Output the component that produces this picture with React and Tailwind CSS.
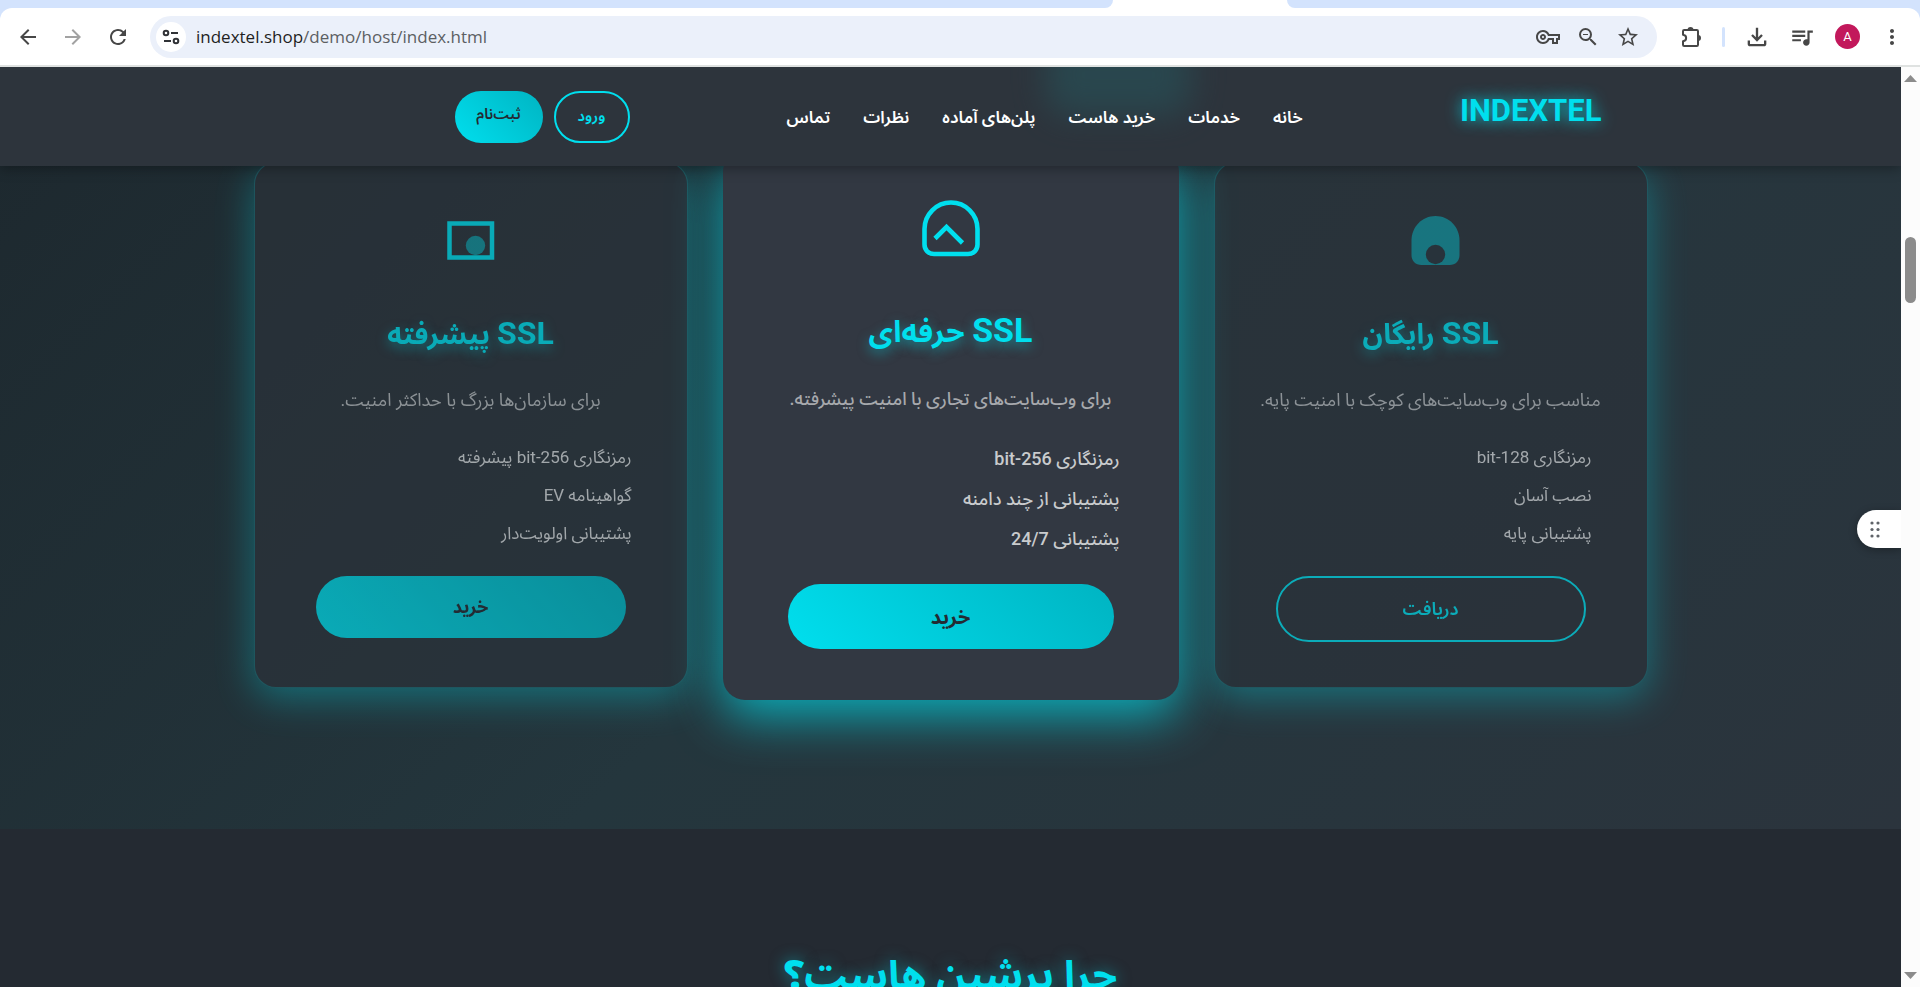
import {
  MdArrowBack,
  MdArrowForward,
  MdRefresh,
  MdOutlineVpnKey,
  MdZoomOut,
  MdStarBorder,
  MdOutlineFileDownload,
  MdQueueMusic,
  MdMoreVert,
} from 'react-icons/md';
import clsx from 'clsx';

const NAV_LINKS = ['خانه', 'خدمات', 'خرید هاست', 'پلن‌های آماده', 'نظرات', 'تماس'];

const PLANS = [
  {
    id: 'free',
    title: 'رایگان',
    description: 'مناسب برای وب‌سایت‌های کوچک با امنیت پایه.',
    features: ['رمزنگاری 128-bit', 'نصب آسان', 'پشتیبانی پایه'],
    action: 'دریافت',
    outlined: true,
    Icon: ArchIcon,
  },
  {
    id: 'pro',
    title: 'حرفه‌ای',
    description: 'برای وب‌سایت‌های تجاری با امنیت پیشرفته.',
    features: ['رمزنگاری 256-bit', 'پشتیبانی از چند دامنه', 'پشتیبانی 24/7'],
    action: 'خرید',
    featured: true,
    Icon: ChevronArchIcon,
  },
  {
    id: 'advanced',
    title: 'پیشرفته',
    description: 'برای سازمان‌ها بزرگ با حداکثر امنیت.',
    features: ['رمزنگاری 256-bit پیشرفته', 'گواهینامه EV', 'پشتیبانی اولویت‌دار'],
    action: 'خرید',
    Icon: FrameIcon,
  },
];

function ArchIcon() {
  return (
    <svg width="80" height="80" viewBox="0 0 80 80" aria-hidden="true">
      <path d="M44.5 18C58 18 68.500 29 68.500 42.500V57c0 6-4 10-10 10h-28c-6 0-10-4-10-10V42.500C20.500 29 31 18 44.500 18z" fill="#00dfee" opacity="0.54" />
      <circle cx="44.500" cy="56.500" r="9.700" fill="#2a333b" />
    </svg>
  );
}

function ChevronArchIcon() {
  return (
    <svg width="80" height="80" viewBox="0 0 80 80" fill="none" stroke="#00dfee" strokeWidth="4.600" aria-hidden="true">
      <path d="M40 16.500C54.600 16.500 66.500 28.400 66.500 43v15.500c0 5.500-4 9.500-9.500 9.500H23c-5.500 0-9.500-4-9.500-9.500V43C13.500 28.400 25.400 16.500 40 16.500z" />
      <path d="M24 52.500L35.500 41 51.500 57" />
    </svg>
  );
}

function FrameIcon() {
  return (
    <svg width="80" height="80" viewBox="0 0 80 80" fill="none" aria-hidden="true">
      <rect x="18.500" y="25.500" width="42.500" height="34" stroke="#00dfee" strokeWidth="4.500" />
      <circle cx="44.500" cy="47.500" r="9.700" fill="#00dfee" opacity="0.54" />
    </svg>
  );
}

function TuneIcon() {
  return (
    <svg width="18" height="18" viewBox="0 0 18 18" fill="none" stroke="#303236" strokeWidth="2" aria-hidden="true">
      <circle cx="4" cy="5" r="2.300" />
      <path d="M9 5h7M2 13h7" />
      <circle cx="14" cy="13" r="2.300" />
    </svg>
  );
}

function PuzzleIcon() {
  return (
    <svg width="24" height="24" viewBox="0 0 24 24" aria-hidden="true">
      <path
        d="M4 6.200C4 5.500 4.500 5 5.200 5H17.800C18.500 5 19 5.500 19 6.200V19.800C19 20.500 18.500 21 17.800 21H5.200C4.500 21 4 20.500 4 19.800V16.300C8.200 15.800 8.200 10.200 4 9.700z"
        fill="none"
        stroke="#474747"
        strokeWidth="2"
        strokeLinejoin="round"
      />
      <path d="M8.500 5a3 3 0 0 1 6 0zM19 10a2.800 2.800 0 0 1 0 6z" fill="#474747" />
    </svg>
  );
}

function ToolbarButton({ label, children, className }) {
  return (
    <button aria-label={label} className={clsx('flex items-center justify-center text-[#474747]', className)}>
      {children}
    </button>
  );
}

function BrowserBar() {
  return (
    <div className="shrink-0 bg-[#d3e3fd]">
      {/* Bottom edge of the tab strip */}
      <div className="flex h-2 bg-white">
        <div className="flex-[1113] rounded-br-lg bg-[#d3e3fd]" />
        <div className="flex-[174]" />
        <div className="flex-[633] rounded-bl-lg bg-[#d3e3fd]" />
      </div>
      <div className="flex h-[59px] items-center rounded-t-xl border-b-2 border-[#dfe2e1] bg-white pr-4 pl-4">
        <div className="flex items-center gap-[21px]">
          <ToolbarButton label="Back"><MdArrowBack size={24} /></ToolbarButton>
          <ToolbarButton label="Forward" className="opacity-50"><MdArrowForward size={24} /></ToolbarButton>
          <ToolbarButton label="Reload"><MdRefresh size={24} /></ToolbarButton>
        </div>
        <div className="ml-5 flex h-[42px] flex-1 items-center rounded-full bg-[#ebf0fa] pr-[17px] pl-[6px]">
          <button aria-label="Site information" className="flex size-[30px] items-center justify-center rounded-full bg-white">
            <TuneIcon />
          </button>
          <a
            href="#"
            className="ml-[10px] flex-1 font-['Open_Sans','Noto_Sans',sans-serif] text-[17px] leading-6 text-[#5c5f63]"
          >
            <span className="text-[#1f1f1f]">indextel.shop</span>/demo/host/index.html
          </a>
          <div className="flex items-center gap-4">
            <ToolbarButton label="Passwords"><MdOutlineVpnKey size={24} /></ToolbarButton>
            <ToolbarButton label="Zoom"><MdZoomOut size={24} /></ToolbarButton>
            <ToolbarButton label="Bookmark"><MdStarBorder size={24} /></ToolbarButton>
          </div>
        </div>
        <div className="ml-[22px] flex items-center">
          <ToolbarButton label="Extensions"><PuzzleIcon /></ToolbarButton>
          <div className="ml-[19px] h-5 w-[3px] rounded-full bg-[#d3e3fd]" />
          <ToolbarButton label="Downloads" className="ml-[18px]"><MdOutlineFileDownload size={28} /></ToolbarButton>
          <ToolbarButton label="Media" className="ml-[18px]"><MdQueueMusic size={26} /></ToolbarButton>
          <button className="ml-5 size-[25px] rounded-full bg-[#c2185b] font-[Roboto,sans-serif] text-[13px] text-white">A</button>
          <ToolbarButton label="Menu" className="ml-5"><MdMoreVert size={24} /></ToolbarButton>
        </div>
      </div>
    </div>
  );
}

function SiteHeader() {
  return (
    <header className="absolute inset-x-0 top-0 z-20 overflow-hidden bg-[#2d343c] shadow-[0_2px_12px_rgba(0,0,0,0.35)]">
      <div className="absolute -top-8 left-[55%] h-20 w-[145px] rounded-3xl bg-[#27535a] opacity-60 blur-lg" />
      <div className="relative mx-auto flex h-[99px] max-w-[1302px] items-center justify-between pl-[155px]">
        <a
          href="#"
          dir="ltr"
          className="mb-3 text-[31px] leading-10 font-bold text-[#00dfee] [text-shadow:0_0_15px_rgba(0,223,238,0.9)]"
        >
          INDEXTEL
        </a>
        <nav className="flex gap-[33px]">
          {NAV_LINKS.map((link) => (
            <a key={link} href="#" className="text-[17px] leading-6 font-semibold text-white">
              {link}
            </a>
          ))}
        </nav>
        <div className="flex gap-[11px]">
          <button className="h-[52px] w-[76px] rounded-[26px] border-2 border-[#00dfee] text-[15px] font-semibold text-[#00dfee]">
            ورود
          </button>
          <button className="h-[52px] w-[88px] rounded-[26px] bg-linear-45 from-[#00dfee] to-[#00b4c2] pb-1 text-[15px] font-semibold text-[#242a32]">
            ثبت‌نام
          </button>
        </div>
      </div>
    </header>
  );
}

function PlanCard({ plan }) {
  const { title, description, features, action, outlined, featured, Icon } = plan;

  return (
    <article
      className={clsx(
        'flex flex-col items-center rounded-[22px] border',
        featured
          ? 'z-10 border-transparent bg-[#323842] px-[64px] pt-[35px] pb-[50px] shadow-[0_16px_50px_rgba(0,223,238,0.7)]'
          : 'my-3 border-[#00dfee]/30 bg-[#2b323a] px-[61px] pt-[35px] pb-11 opacity-70 shadow-[0_10px_38px_rgba(0,223,238,0.5)]'
      )}
    >
      <Icon />
      <h3
        className={clsx(
          'font-bold whitespace-nowrap text-[#00dfee] [text-shadow:0_4px_12px_rgba(0,223,238,0.5)]',
          featured ? 'mt-[39px] text-[30px] leading-[50px]' : 'mt-[30px] text-[28px] leading-[50px]'
        )}
      >
        <span className={featured ? 'text-[34px]' : 'text-[32px]'}>SSL</span> {title}
      </h3>
      <p
        className={clsx(
          'text-lg leading-8 whitespace-nowrap',
          featured ? 'mt-[26px] font-medium text-[#a7a9ad]' : 'mt-6 text-[#b8babd]'
        )}
      >
        {description}
      </p>
      <ul
        className={clsx(
          '-mr-[6px] self-start whitespace-nowrap',
          featured
            ? 'mt-6 text-lg leading-10 font-medium text-[#c9cbcd]'
            : 'mt-[22px] text-[17px] leading-[38px] text-[#d8d9db]'
        )}
      >
        {features.map((feature) => (
          <li key={feature}>{feature}</li>
        ))}
      </ul>
      <button
        className={clsx(
          'w-full rounded-full',
          featured ? 'mt-[25px] h-[65px] text-xl' : 'mt-6 text-lg',
          !featured && (outlined ? 'h-[66px]' : 'h-[62px]'),
          outlined
            ? 'border-2 border-[#00dfee] font-semibold text-[#00dfee]'
            : 'bg-linear-45 from-[#00dfee] to-[#00b4c2] font-bold text-[#242a32]'
        )}
      >
        {action}
      </button>
    </article>
  );
}

function Scrollbar() {
  return (
    <div className="flex w-[19px] shrink-0 flex-col items-center bg-[#fcfcfc] py-2" aria-hidden="true">
      <svg width="13" height="7" viewBox="0 0 13 7"><path d="M6.500 0L13 7H0z" fill="#8b8b8b" /></svg>
      <div className="mt-[155px] h-[66px] w-[11px] rounded-full bg-[#8b8b8b]" />
      <svg className="mt-auto" width="13" height="7" viewBox="0 0 13 7"><path d="M0 0h13L6.500 7z" fill="#8b8b8b" /></svg>
    </div>
  );
}

export default function App() {
  return (
    <div className="flex h-screen flex-col overflow-hidden">
      <BrowserBar />
      <div className="flex min-h-0 flex-1">
        <div
          dir="rtl"
          className="relative flex-1 overflow-hidden bg-[#242a32] font-[Roboto,'Noto_Sans_Arabic','DejaVu_Sans',sans-serif]"
        >
          <SiteHeader />
          <section className="bg-[linear-gradient(135deg,#1d282e_0%,#24363d_50%,#2b343d_100%)] pt-[83px] pb-[129px]">
            <div className="mx-auto grid max-w-[1394px] grid-cols-[minmax(0,434fr)_minmax(0,456fr)_minmax(0,434fr)] gap-[35px]">
              {PLANS.map((plan) => (
                <PlanCard key={plan.id} plan={plan} />
              ))}
            </div>
          </section>
          <section className="pt-[112px]">
            <h2 className="text-center text-[40px] leading-[70px] font-bold text-[#00dfee] [text-shadow:0_0_15px_rgba(0,223,238,0.5)]">
              چرا پرشین هاست؟
            </h2>
          </section>
          <button
            aria-label="Side panel"
            className="absolute top-[443px] right-0 z-10 flex h-[38px] w-11 items-center justify-start rounded-l-full bg-white pr-[21px] shadow-[0_2px_8px_rgba(0,0,0,0.3)]"
          >
            <svg width="10" height="17" viewBox="0 0 10 17" fill="#5f6368">
              <circle cx="2" cy="2" r="1.600" />
              <circle cx="8" cy="2" r="1.600" />
              <circle cx="2" cy="8.500" r="1.600" />
              <circle cx="8" cy="8.500" r="1.600" />
              <circle cx="2" cy="15" r="1.600" />
              <circle cx="8" cy="15" r="1.600" />
            </svg>
          </button>
        </div>
        <Scrollbar />
      </div>
    </div>
  );
}
